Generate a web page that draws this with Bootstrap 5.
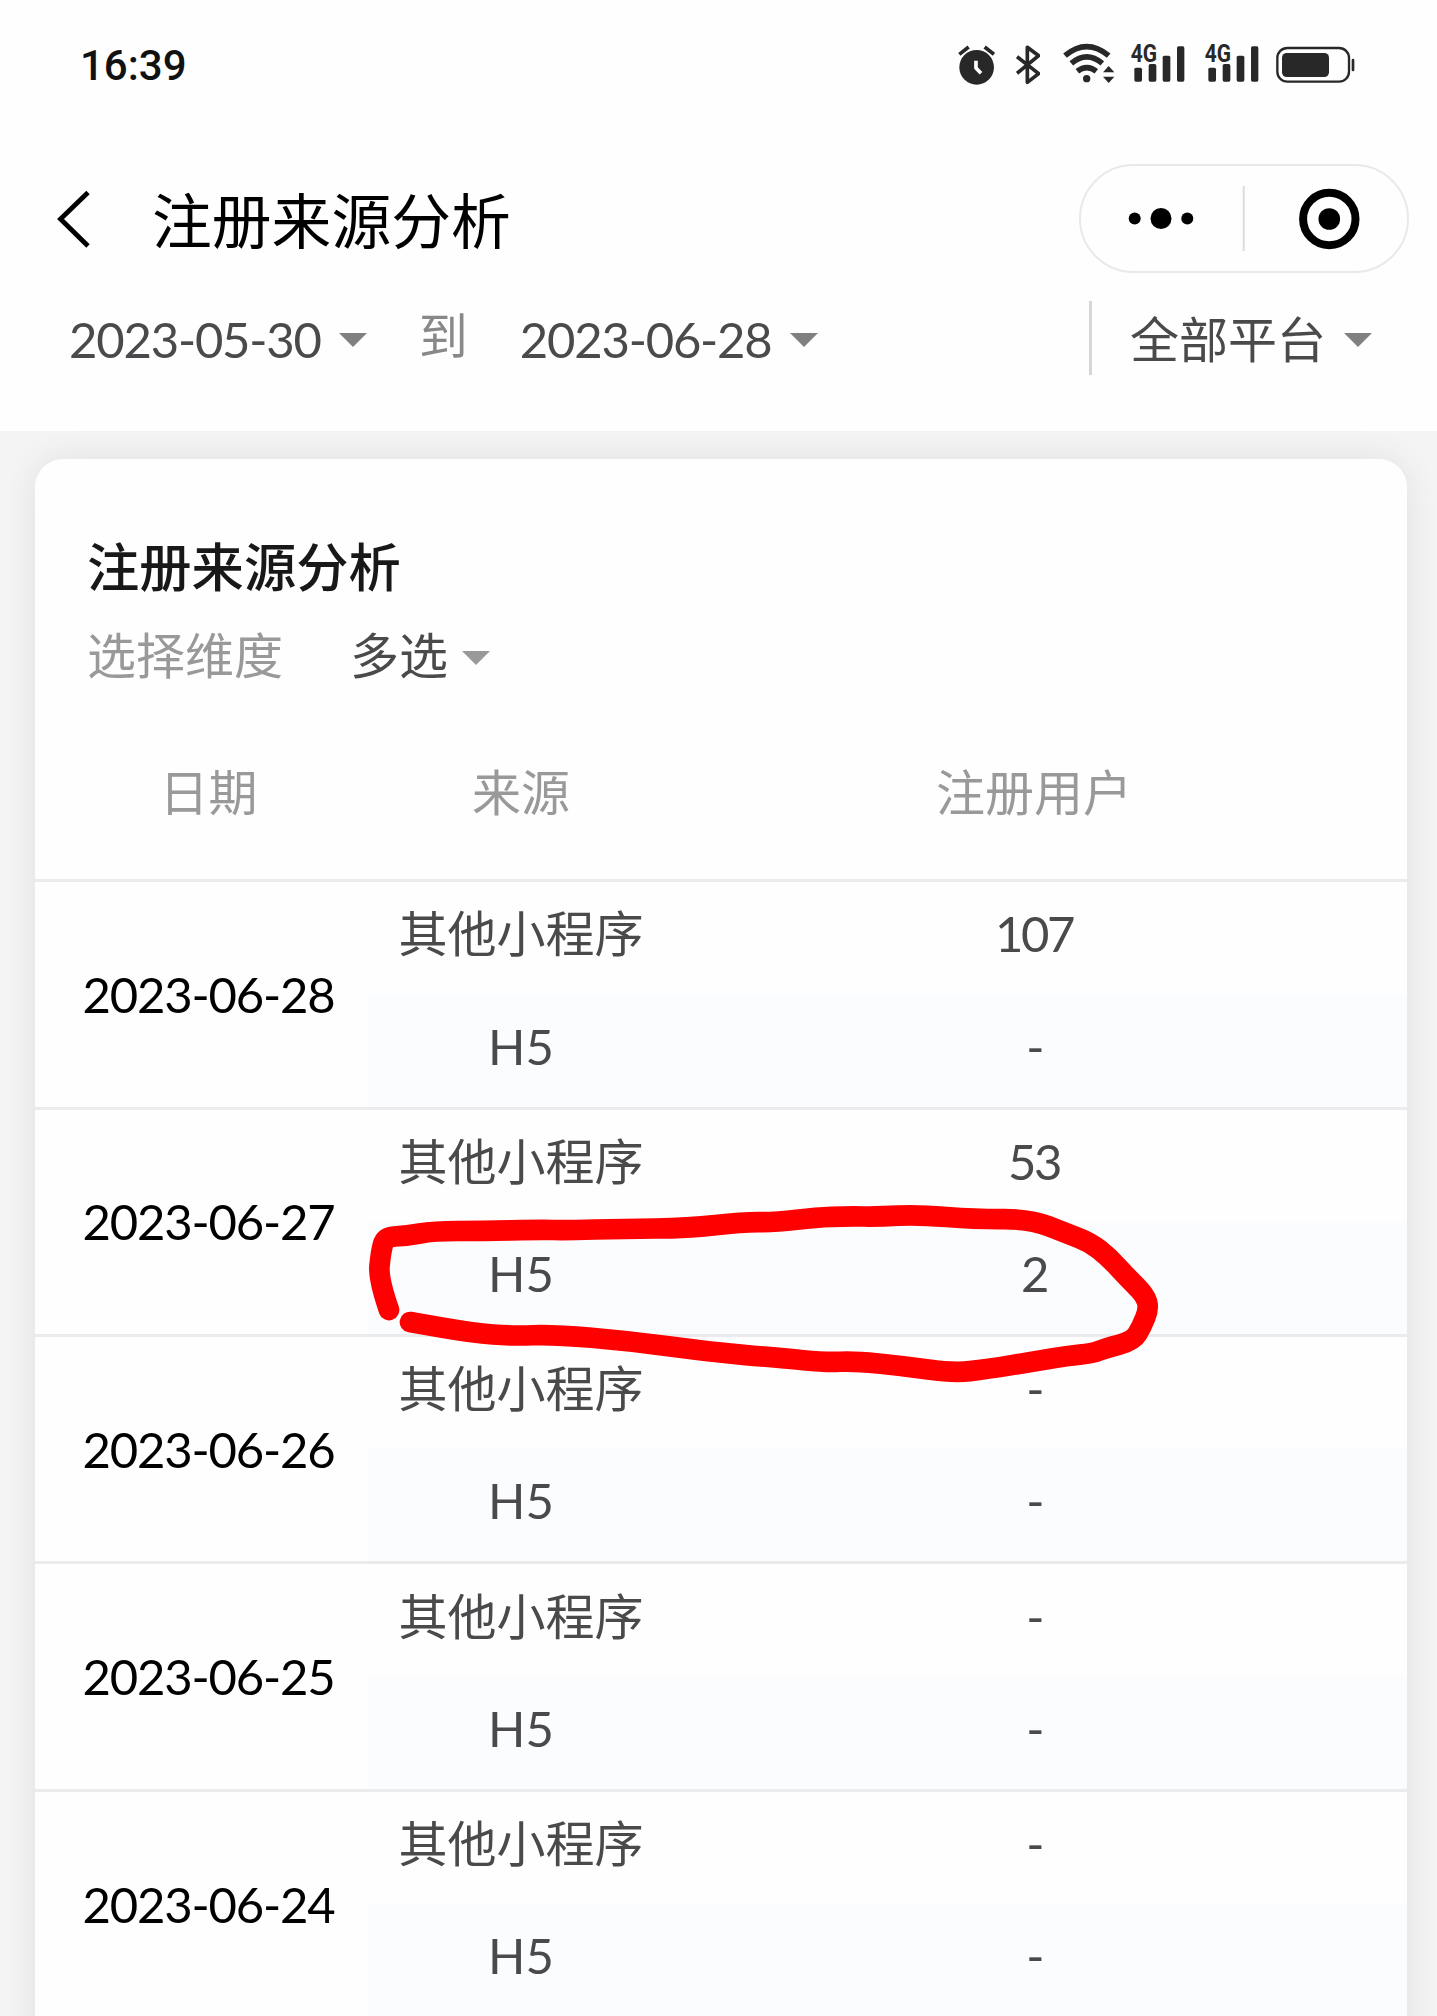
<!DOCTYPE html>
<html lang="zh-CN">
<head>
<meta charset="utf-8">
<meta name="viewport" content="width=device-width, initial-scale=1">
<title>注册来源分析</title>
<link href="https://cdn.jsdelivr.net/npm/bootstrap@5.3.0/dist/css/bootstrap.min.css" rel="stylesheet">
<style>
  body { background: #f4f4f4; font-family: Lato, "Noto Sans CJK SC", sans-serif; color: #4a4a4c; font-size: 49px; line-height: 1; }
  .screen { height: 2016px; }
  .top-area { height: 431px; background: #fefefe; }
  .status-bar { height: 130px; padding: 0 82px 0 80px; }
  .clock { font: 500 42px/1 Roboto, sans-serif; color: #111; padding-top: 2px; }
  .status-icons { color: #282828; }
  .status-icons svg { height: 40px; display: block; fill: currentColor; }
  .ic-bt { margin-left: 20.7px; } .ic-wifi { margin-left: 22.7px; }
  .ic-sig { margin-left: 15.3px; } .ic-sig2 { margin-left: 19.3px; } .ic-bat { margin-left: 17.3px; }
  .title-bar { height: 177px; padding: 0 28px 0 57px; color: #000; }
  .page-title { font-size: 59.8px; font-weight: 400; margin-left: 61px; line-height: 1; padding-top: 6px; }
  .capsule { width: 330px; height: 109px; border: 2px solid #e9e9e9; border-radius: 55px; }
  .filter-bar { height: 74px; padding: 0 65px 0 69px; margin-top: -6px; }
  .filter-bar > span { padding-top: 3px; }
  .date-txt { letter-spacing: -1.2px; white-space: nowrap; }
  .drop { width: 0; height: 0; border: 14px solid transparent; border-top-color: #808080; border-bottom: 0; margin-top: 4px; }
  .filter-bar .drop { margin-left: 18px; }
  .drop-light { border-top-color: #999; margin-left: 14px; }
  .filter-bar .to-label { color: #888; margin: 0 52px; padding: 0 0 5px; }
  .v-rule { width: 3px; height: 74px; background: #d6d6d6; margin-right: 38px; }
  .report { margin: 28px 30px 0 35px; height: 1700px; border: 0; border-radius: 28px; background: #fefefe; box-shadow: 0 0 32px rgba(70,70,110,.11); }
  .report-head { padding: 82px 53px 0 52px; }
  .report-title { font-size: 52.3px; font-weight: 500; color: #181818; line-height: 1; margin: 0; }
  .picker { margin-top: 38px; }
  .picker-value { margin-left: 67px; }
  .muted { color: #999; }
  .grid-head { height: 174px; color: #999; margin-top: 25px; }
  .day { height: 227.4px; border-top: 3px solid #ebebed; }
  .c-date { width: 333px; padding-left: 14px; color: #000; }
  .c-src { width: 306px; } .c-num { width: 720px; }
  .grid-head .c-date { color: inherit; }
  .sub { height: 50%; padding-bottom: 9px; }
  .sub .c-num { letter-spacing: -2.5px; }
  .sub-alt { background: #fbfcfe; }
  .pen { left: 325px; top: 736px; width: 810px; height: 195px; }
</style>
<script src="https://cdn.jsdelivr.net/npm/bootstrap@5.3.0/dist/js/bootstrap.bundle.min.js"></script>
</head>
<body>
<div class="screen overflow-hidden">
  <header class="top-area">
    <div class="status-bar d-flex justify-content-between align-items-center">
      <span class="clock">16:39</span>
      <div class="status-icons d-flex align-items-center">
        <svg width="37.3" viewBox="82 72 112 120"><circle cx="138" cy="139" r="52"/><path d="M86 100L114 78M190 100L162 78" stroke="currentColor" stroke-width="11"/><path d="M136 119v22l15 16" fill="none" stroke="#fff" stroke-width="11"/></svg>
        <svg class="ic-bt" width="24.7" viewBox="256 72 74 120"><path d="M259 107L324 158L290 184V79L324 104L259 157" fill="none" stroke="currentColor" stroke-width="11" stroke-linejoin="round"/></svg>
        <svg class="ic-wifi" width="52" viewBox="398 72 156 120" overflow="visible"><g fill="none" stroke="currentColor" stroke-width="17"><path d="M404 104Q469 50 535 104"/><path d="M423 127Q469 88 516 127"/><path d="M441 151Q469 129 498 151"/></g><circle cx="469" cy="173" r="11"/><path d="M518 154L535 135L552 154zM518 167H552L535 186z"/></svg>
        <svg class="ic-sig" width="54.7" viewBox="600 72 164 120" overflow="visible"><text x="602" y="123" font-family="Roboto" font-weight="700" font-size="77" textLength="79" lengthAdjust="spacingAndGlyphs">4G</text><rect x="613" y="140" width="23" height="42" rx="5"/><rect x="656" y="129" width="23" height="53" rx="5"/><rect x="698" y="104" width="23" height="78" rx="5"/><rect x="741" y="76" width="22" height="106" rx="5"/></svg>
        <svg class="ic-sig2" width="54.7" viewBox="600 72 164 120" overflow="visible"><text x="602" y="123" font-family="Roboto" font-weight="700" font-size="77" textLength="79" lengthAdjust="spacingAndGlyphs">4G</text><rect x="613" y="140" width="23" height="42" rx="5"/><rect x="656" y="129" width="23" height="53" rx="5"/><rect x="698" y="104" width="23" height="78" rx="5"/><rect x="741" y="76" width="22" height="106" rx="5"/></svg>
        <svg class="ic-bat" width="78.7" viewBox="1038 72 236 120"><rect x="1042" y="81" width="215" height="101" rx="30" fill="none" stroke="currentColor" stroke-width="7"/><rect x="1056" y="96" width="141" height="72" rx="14"/><rect x="1265" y="113" width="8" height="38" rx="4"/></svg>
      </div>
    </div>
    <div class="title-bar d-flex align-items-center">
      <svg width="34" height="60" viewBox="57 188.500 34 60"><path d="M88 192L60.500 218.500L88 245.500" fill="none" stroke="#000" stroke-width="4.800"/></svg>
      <h1 class="page-title mb-0">注册来源分析</h1>
      <div class="capsule ms-auto">
        <svg class="d-block" width="326" height="105" viewBox="1081 166 326 105"><circle cx="1134.700" cy="218.500" r="6"/><circle cx="1161" cy="218.500" r="10.500"/><circle cx="1187.300" cy="218.500" r="6"/><path d="M1243.700 186V251" stroke="#dcdcdc" stroke-width="2"/><circle cx="1329.300" cy="219" r="26.200" fill="none" stroke="#000" stroke-width="8"/><circle cx="1329.300" cy="219" r="10.800"/></svg>
      </div>
    </div>
    <div class="filter-bar d-flex align-items-center">
      <span class="date-txt">2023-05-30</span><i class="drop"></i>
      <span class="to-label">到</span>
      <span class="date-txt">2023-06-28</span><i class="drop"></i>
      <i class="v-rule ms-auto"></i>
      <span>全部平台</span><i class="drop"></i>
    </div>
  </header>

  <main class="report card position-relative">
    <div class="report-head">
      <h2 class="report-title">注册来源分析</h2>
      <div class="picker d-flex align-items-center">
        <span class="muted">选择维度</span><span class="picker-value">多选</span><i class="drop drop-light"></i>
      </div>
    </div>
    <div class="grid-head d-flex align-items-center text-center">
      <span class="c-date">日期</span><span class="c-src">来源</span><span class="c-num">注册用户</span>
    </div>
    <div id="days"></div>
    <svg class="pen position-absolute" viewBox="360 1195 810 195"><path id="stroke" fill="none" stroke="#fe0000" stroke-width="20.700" stroke-linecap="round" stroke-linejoin="round"/></svg>
  </main>
</div>
<script>
  const days = [["2023-06-28","107","-"],["2023-06-27","53","2"],["2023-06-26","-","-"],["2023-06-25","-","-"],["2023-06-24","-","-"]];
  document.getElementById("days").innerHTML = days.map(([d, a, b]) => `
    <div class="day d-flex text-center">
      <div class="c-date d-flex align-items-center justify-content-center"><span class="date-txt">${d}</span></div>
      <div class="flex-grow-1">
        <div class="sub d-flex align-items-center"><span class="c-src">其他小程序</span><span class="c-num">${a}</span></div>
        <div class="sub sub-alt d-flex align-items-center"><span class="c-src">H5</span><span class="c-num">${b}</span></div>
      </div>
    </div>`).join("");

  // Freehand mark: midpoint-smoothed quadratic curve through the sampled points
  const pts = [[389,1310],[378.3,1279],[380.700,1253],[385,1236.700],[406.700,1236],[433.300,1231],[483,1231],[540,1229.700],[566.700,1230.300],[623,1228.700],[688,1228.300],[743,1222],[776.700,1222.300],[816.700,1217.300],[846.700,1216.300],[880,1216.700],[916.700,1214.700],[976.700,1219.300],[1030,1219],[1066.700,1233.300],[1090,1242.300],[1108.300,1256.700],[1126.700,1276.700],[1145,1295],[1149,1308.300],[1141.700,1326.700],[1133,1341],[1105,1348.300],[1093,1353.300],[1066.700,1356],[1036.700,1361],[986.700,1369.300],[953.300,1373],[903.300,1366],[853.300,1361],[826.700,1362.500],[780,1358],[706.700,1351.700],[630,1341],[553,1334.500],[513,1336],[473,1333],[410,1322]];
  let d = `M${pts[0]}`;
  for (let i = 1; i < pts.length - 1; i++) {
    const [x, y] = pts[i], [u, v] = pts[i + 1];
    d += `Q${x} ${y} ${(x + u) / 2} ${(y + v) / 2}`;
  }
  document.getElementById("stroke").setAttribute("d", d + `L${pts[pts.length - 1]}`);
</script>
</body>
</html>
